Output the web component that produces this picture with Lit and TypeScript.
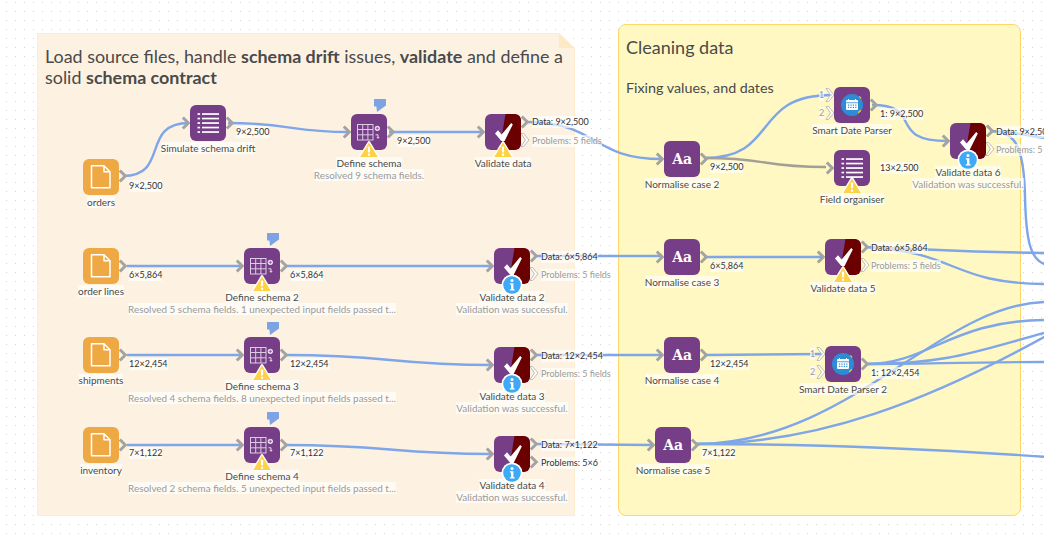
import { LitElement, html, css, svg, nothing } from "lit";
import { customElement } from "lit/decorators.js";

type Icon = "file" | "list" | "table" | "check" | "aa" | "cal";
type N = {
  x: number; y: number; icon: Icon; name: string; desc?: string;
  badge?: "warn" | "info"; note?: boolean; orange?: boolean;
};
type P = { x: number; y: number; t: string; gray?: boolean };

const nodes: N[] = [
  { x: 83, y: 159, icon: "file", name: "orders", orange: true },
  { x: 190, y: 105, icon: "list", name: "Simulate schema drift" },
  { x: 351, y: 114, icon: "table", name: "Define schema", desc: "Resolved 9 schema fields.", badge: "warn", note: true },
  { x: 485, y: 114, icon: "check", name: "Validate data", badge: "warn" },
  { x: 664, y: 141, icon: "aa", name: "Normalise case 2" },
  { x: 834, y: 87, icon: "cal", name: "Smart Date Parser" },
  { x: 834, y: 150, icon: "list", name: "Field organiser", badge: "warn" },
  { x: 950, y: 123, icon: "check", name: "Validate data 6", desc: "Validation was successful.", badge: "info" },
  { x: 83, y: 248, icon: "file", name: "order lines", orange: true },
  { x: 244, y: 248, icon: "table", name: "Define schema 2", desc: "Resolved 5 schema fields. 1 unexpected input fields passed t...", badge: "warn", note: true },
  { x: 494, y: 248, icon: "check", name: "Validate data 2", desc: "Validation was successful.", badge: "info" },
  { x: 664, y: 239, icon: "aa", name: "Normalise case 3" },
  { x: 825, y: 239, icon: "check", name: "Validate data 5", badge: "warn" },
  { x: 83, y: 337, icon: "file", name: "shipments", orange: true },
  { x: 244, y: 337, icon: "table", name: "Define schema 3", desc: "Resolved 4 schema fields. 8 unexpected input fields passed t...", badge: "warn", note: true },
  { x: 494, y: 347, icon: "check", name: "Validate data 3", desc: "Validation was successful.", badge: "info" },
  { x: 664, y: 337, icon: "aa", name: "Normalise case 4" },
  { x: 825, y: 346, icon: "cal", name: "Smart Date Parser 2" },
  { x: 83, y: 427, icon: "file", name: "inventory", orange: true },
  { x: 244, y: 427, icon: "table", name: "Define schema 4", desc: "Resolved 2 schema fields. 5 unexpected input fields passed t...", badge: "warn", note: true },
  { x: 494, y: 436, icon: "check", name: "Validate data 4", desc: "Validation was successful.", badge: "info" },
  { x: 655, y: 427, icon: "aa", name: "Normalise case 5" },
];

const edges: string[] = [
  "M123 176 C170 176 140 123 189 123",
  "M228 123 C290 123 290 132 349 132",
  "M389 132 L483 132",
  "M525 122 C600 122 590 159 662 159",
  "M704 158 C780 158 750 95 832 95",
  "M872 105 C925 105 885 141 948 141",
  "M127 266 L242 266",
  "M286 266 L492 266",
  "M535 256 L662 256",
  "M704 257 L823 257",
  "M865 247 C950 250 960 252 1048 253",
  "M865 247 C960 252 950 284 1048 284",
  "M990 131 C1020 131 1024 137 1048 138",
  "M990 131 C1015 131 1024 145 1025 197 C1026 240 1030 262 1048 265",
  "M127 355 L242 355",
  "M286 355 C390 355 390 365 492 365",
  "M535 355 L662 355",
  "M704 355 L823 354",
  "M866 364 C930 364 960 362 1048 362",
  "M866 364 C930 364 950 320 1048 320",
  "M866 364 C950 364 980 350 1048 332",
  "M127 445 L242 445",
  "M286 445 C390 445 390 454 492 454",
  "M535 444 L653 445",
  "M696 444 C850 444 940 302 1048 302",
  "M696 444 C820 444 930 400 1048 335",
  "M696 444 C800 444 900 447 1048 457",
];

const chevrons: [number, number][] = [
  [119, 176], [182, 123], [226, 123], [343, 132], [387, 132], [477, 132], [521, 122], [656, 159],
  [700, 159], [826, 168], [870, 105], [942, 141], [986, 131],
  [119, 266], [236, 266], [280, 266], [486, 266], [530, 256], [656, 257], [700, 257], [817, 257], [861, 247],
  [119, 355], [236, 355], [280, 355], [486, 365], [530, 355], [656, 355], [700, 355],
  [861, 364],
  [119, 445], [236, 445], [280, 445], [486, 454], [530, 444], [530, 462], [647, 445], [691, 445],
];

const hollow: [number, number][] = [
  [521, 140], [986, 149], [530, 274], [861, 265], [530, 373],
  [826, 95], [826, 113], [817, 354], [817, 372],
];

const ports: P[] = [
  { x: 129, y: 186, t: "9×2,500" },
  { x: 236, y: 131.5, t: "9×2,500" },
  { x: 397, y: 141, t: "9×2,500" },
  { x: 532, y: 122, t: "Data: 9×2,500" },
  { x: 532, y: 140.5, t: "Problems: 5 fields", gray: true },
  { x: 710, y: 167, t: "9×2,500" },
  { x: 880, y: 113.5, t: "1: 9×2,500" },
  { x: 880, y: 167.5, t: "13×2,500" },
  { x: 996, y: 131.5, t: "Data: 9×2,500" },
  { x: 996, y: 149.5, t: "Problems: 5 fields", gray: true },
  { x: 129, y: 275, t: "6×5,864" },
  { x: 290, y: 275, t: "6×5,864" },
  { x: 541, y: 256.5, t: "Data: 6×5,864" },
  { x: 541, y: 274.5, t: "Problems: 5 fields", gray: true },
  { x: 710, y: 265.5, t: "6×5,864" },
  { x: 871, y: 247.5, t: "Data: 6×5,864" },
  { x: 871, y: 265.5, t: "Problems: 5 fields", gray: true },
  { x: 129, y: 364, t: "12×2,454" },
  { x: 290, y: 364, t: "12×2,454" },
  { x: 541, y: 355.5, t: "Data: 12×2,454" },
  { x: 541, y: 373.5, t: "Problems: 5 fields", gray: true },
  { x: 710, y: 364, t: "12×2,454" },
  { x: 871, y: 373, t: "1: 12×2,454" },
  { x: 129, y: 453, t: "7×1,122" },
  { x: 290, y: 453, t: "7×1,122" },
  { x: 541, y: 444.5, t: "Data: 7×1,122" },
  { x: 541, y: 462.5, t: "Problems: 5×6" },
  { x: 702, y: 453, t: "7×1,122" },
  { x: 819, y: 95, t: "1", gray: true },
  { x: 819, y: 113, t: "2", gray: true },
  { x: 810, y: 354, t: "1", gray: true },
  { x: 810, y: 372, t: "2", gray: true },
];

const iconSvg = (i: Icon) => {
  switch (i) {
    case "file":
      return svg`<path d="M8.5 6.8H21L27 12.8V28.8H8.5Z M21 6.8V12.8H27" fill="none" stroke="#fff" stroke-width="1.5" stroke-linejoin="round"/>`;
    case "list":
      return svg`${[9, 13.5, 18, 22.5, 27].map(
        (y) => svg`<rect x="7.5" y="${y - 0.8}" width="2.6" height="1.7" fill="#fff"/><rect x="12" y="${y - 0.8}" width="17" height="1.7" fill="#fff"/>`
      )}`;
    case "table":
      return svg`<g fill="none" stroke="#dccce4" stroke-width="1"><rect x="6.5" y="10.5" width="15.5" height="15.5"/><path d="M6.5 15.5H22M6.5 20.8H22M11.7 10.5V26M16.9 10.5V26"/></g>
        <circle cx="26.3" cy="14.3" r="2.6" fill="#efe6f2"/><path d="M24.6 14.3H28M26.3 12.6V16" stroke="#763e86" stroke-width=".7"/>
        <path d="M24.5 20.8H27V24M25.8 23 27 24.4 28.2 23" fill="none" stroke="#e6dceb" stroke-width="1"/>`;
    case "check":
      return svg`<path d="M20.5 0H30a6 6 0 0 1 6 6V30a6 6 0 0 1-6 6H14.5Z" fill="#6b0000"/>
        <path d="M10 19.5 13 16.2 16.6 20.6 26.2 9 27.8 10.4 19.6 27H16.4Z" fill="#fff"/>`;
    case "cal":
      return svg`<circle cx="18" cy="18" r="11" fill="#2a8dd6"/>
        <rect x="12" y="13" width="12" height="10" rx="1" fill="#fff"/>
        <rect x="12" y="15.4" width="12" height=".8" fill="#2a8dd6"/>
        <path d="M14.5 12v2M21.5 12v2" stroke="#fff" stroke-width="1"/>
        <g fill="#2a8dd6">${[14, 16.4, 18.8, 21.2].flatMap((x) => [17.5, 19.8].map((y) => svg`<rect x="${x}" y="${y}" width="1.2" height="1.2"/>`))}</g>
        <path d="M25 9.5a3 3 0 0 1 2 2" fill="none" stroke="#f0c93c" stroke-width="1.3"/>
        <path d="M24 25.5a3 3 0 0 0 2.5-2.5" fill="none" stroke="#f0c93c" stroke-width="1.3"/>`;
    default:
      return nothing;
  }
};

@customElement("flow-node")
export class FlowNode extends LitElement {
  static properties = { data: { attribute: false } };
  data!: N;

  static styles = css`
    :host { display: contents; }
    .node {
      position: absolute; width: 36px; display: flex; flex-direction: column; align-items: center;
    }
    .box {
      position: relative; flex: none; width: 36px; height: 36px; border-radius: 6px; background: #763e86;
      display: flex; align-items: center; justify-content: center;
    }
    .box.orange { background: #eea945; }
    .box svg.ic { position: absolute; inset: 0; border-radius: 6px; }
    .aa {
      font: 700 14px "DejaVu Serif", "Liberation Serif", serif; color: #fff; line-height: 1; letter-spacing: -0.2px;
    }
    .badge { position: absolute; left: 7px; top: 26px; width: 22px; height: 20px; }
    .badge.info { left: 7px; top: 26px; width: 22px; height: 22px; }
    .note { position: absolute; left: 23px; top: -15px; width: 12px; height: 13px; }
    .name, .desc {
      flex: none; white-space: nowrap; font-size: 10px; line-height: 12px; background: rgba(255, 255, 255, 0.65);
    }
    .name { color: #4a4a4a; margin-top: 1px; }
    .mt { margin-top: 7px; }
    .desc { color: #9a9a9a; font-size: 9.9px; }
    .labels { display: flex; flex-direction: column; align-items: center; height: 24px; width: 36px; }
  `;

  render() {
    const n = this.data;
    return html`<div class="node" style="left:${n.x}px;top:${n.y}px">
      <div class="box ${n.orange ? "orange" : ""}">
        ${n.icon === "aa"
          ? html`<span class="aa">Aa</span>`
          : html`<svg class="ic" width="36" height="36" viewBox="0 0 36 36">${iconSvg(n.icon)}</svg>`}
        ${n.note
          ? html`<svg class="note" viewBox="0 0 12 13"><path d="M.5 0H11.5a.5.5 0 0 1 .5.5V6.5L3 13 2.4 7.5H.5A.5.5 0 0 1 0 7V.5A.5.5 0 0 1 .5 0Z" fill="#7ea3e4"/></svg>`
          : nothing}
        ${n.badge === "warn"
          ? html`<svg class="badge" viewBox="0 0 22 20"><path d="M11 2.4 19.8 17H2.2Z" fill="#ffd144" stroke="#fff" stroke-width="2.6" stroke-linejoin="round" paint-order="stroke"/><rect x="9.9" y="6.4" width="2.2" height="6.2" rx=".8" fill="#fff"/><circle cx="11" cy="14.8" r="1.25" fill="#fff"/></svg>`
          : n.badge === "info"
          ? html`<svg class="badge info" viewBox="0 0 22 22"><circle cx="11" cy="11" r="10.5" fill="#fff"/><circle cx="11" cy="11" r="8.8" fill="#3fa9f5"/><circle cx="11" cy="6.6" r="1.5" fill="#fff"/><path d="M8.8 9.2H12.4V15.2H13.6V16.4H8.8V15.2H10V10.4H8.8Z" fill="#fff"/></svg>`
          : nothing}
      </div>
      <div class="labels">
        <span class="name ${n.badge ? "mt" : ""}">${n.name}</span>
        ${n.desc ? html`<span class="desc">${n.desc}</span>` : nothing}
      </div>
    </div>`;
  }
}

@customElement("app-root")
export class AppRoot extends LitElement {
  static styles = css`
    :host {
      display: block; position: relative; width: 1044px; height: 536px; overflow: hidden;
      background-color: #fff;
      background-image: radial-gradient(circle at center, #d4d4d4 0.7px, transparent 1px);
      background-size: 9px 9px; background-position: 2px -2px;
      font-family: Lato, "Open Sans", sans-serif; color: #4a4a4a;
    }
    .panel { position: absolute; box-sizing: border-box; }
    .p1 {
      left: 37px; top: 33px; width: 538px; height: 483px; background: #fdf2e2; padding: 13px 8px;
      clip-path: polygon(0 0, 522px 0, 100% 15px, 100% 100%, 0 100%);
      font-size: 17.9px; line-height: 20.5px; box-shadow: inset 0 0 0 1px #fdeccd;
    }
    .p1::after {
      content: ""; position: absolute; left: 522px; top: 0; width: 16px; height: 15px; background: #fde9c6;
      clip-path: polygon(0 0, 100% 100%, 0 100%);
    }
    .p1 b { font-weight: 700; }
    .p1 p { margin: 0; }
    .p2 {
      left: 618px; top: 24px; width: 403px; height: 492px; background: #fff8c2; border: 1px solid #fdd868;
      border-radius: 8px; padding: 11px 7px; display: flex; flex-direction: column; gap: 20px;
    }
    .p2 h2 { margin: 0; font-size: 18px; line-height: 22px; font-weight: 400; }
    .p2 p { margin: 0; font-size: 14.3px; line-height: 20px; }
    svg.edges { position: absolute; left: 0; top: 0; }
    .port {
      position: absolute; white-space: nowrap; font-size: 9px; line-height: 12px; color: #333;
      background: rgba(255, 255, 255, 0.65); transform: translateY(-50%);
    }
    .port.gray { color: #9a9a9a; }
  `;

  render() {
    return html`
      <div class="panel p1">
        <p>Load source files, handle <b>schema drift</b> issues, <b>validate</b> and define a solid <b>schema contract</b></p>
      </div>
      <div class="panel p2">
        <h2>Cleaning data</h2>
        <p>Fixing values, and dates</p>
      </div>
      <svg class="edges" width="1044" height="536" viewBox="0 0 1044 536" fill="none">
        ${edges.map((d) => svg`<path d="${d}" stroke="#7ea6e8" stroke-width="2.4"/>`)}
        <path d="M704 158 C770 158 760 167 826 167" stroke="#a39f94" stroke-width="2.4"/>
        ${chevrons.map(([x, y]) => svg`<path d="M${x + 0.8} ${y - 5.5} L${x + 6.3} ${y} L${x + 0.8} ${y + 5.5}" stroke="#a3a3a3" stroke-width="3"/>`)}
        ${hollow.map(([x, y]) => svg`<path d="M${x} ${y - 6.5}H${x + 2.6}L${x + 8} ${y}L${x + 2.6} ${y + 6.5}H${x}L${x + 4.4} ${y}Z" fill="#fff" fill-opacity=".7" stroke="#bdbdbd" stroke-width="1"/>`)}
      </svg>
      ${nodes.map((n) => html`<flow-node .data=${n}></flow-node>`)}
      ${ports.map((p) => html`<span class="port ${p.gray ? "gray" : ""}" style="left:${p.x}px;top:${p.y}px">${p.t}</span>`)}
    `;
  }
}
